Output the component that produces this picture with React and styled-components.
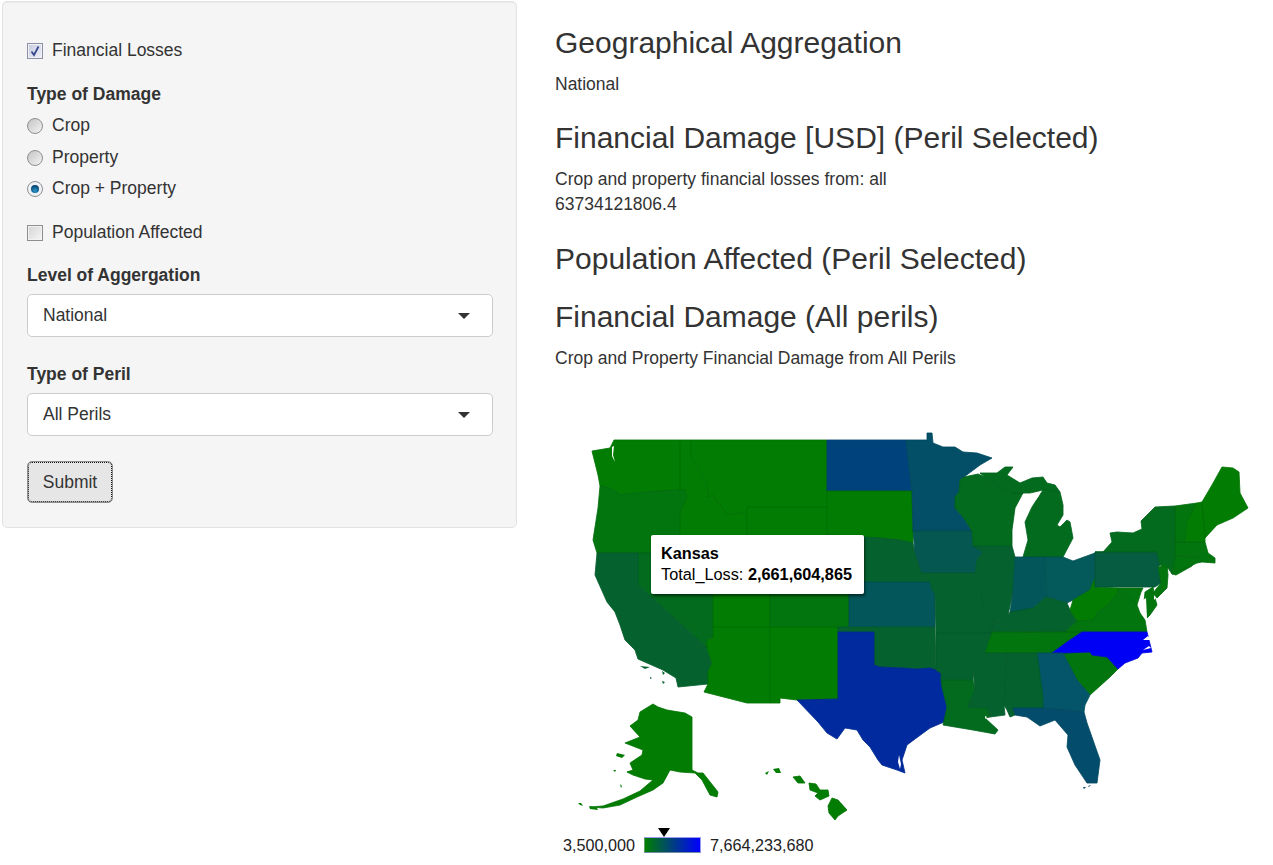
import React from "react";
import styled, { createGlobalStyle } from "styled-components";

const Global = createGlobalStyle`
  html, body { margin: 0; padding: 0; background: #fff; }
  body { font-family: "Liberation Sans", Arial, sans-serif; font-size: 17.5px; line-height: 25px; color: #333; overflow: hidden; }
`;

const Page = styled.div`
  display: grid;
  grid-template-columns: 515px 1fr;
  column-gap: 38px;
  padding-left: 2px;
  width: 1273px;
  height: 865px;
  box-sizing: border-box;
  overflow: hidden;
`;

const Well = styled.form`
  align-self: start;
  margin-top: 1px;
  height: 527px;
  box-sizing: border-box;
  padding: 36px 23px 24px 24px;
  background: #f5f5f5;
  border: 1px solid #e3e3e3;
  border-radius: 5px;
  box-shadow: inset 0 1px 1px rgba(0, 0, 0, 0.05);
  display: flex;
  flex-direction: column;
`;

const Option = styled.label`
  display: flex;
  align-items: center;
  gap: 9px;
  height: 25px;
  flex: none;
  margin-top: ${(p) => p.$top || 0}px;
`;

const Box = styled.span`
  width: 16px;
  height: 16px;
  flex: none;
  box-sizing: border-box;
  border: 1px solid ${(p) => (p.$checked ? "#8c8fa6" : "#8e8e8e")};
  background: ${(p) =>
    p.$checked
      ? "linear-gradient(135deg,#c6cbe0,#eef0f8)"
      : "linear-gradient(135deg,#d4d4d4,#f6f6f6)"};
  box-shadow: inset 0 0 0 1px #f2f2f2;
  display: flex;
  align-items: center;
  justify-content: center;
`;

const Radio = styled.span`
  width: 16px;
  height: 16px;
  flex: none;
  box-sizing: border-box;
  border-radius: 50%;
  border: 1px solid #8f8f8f;
  background: ${(p) => (p.$checked ? "#eef2f6" : "linear-gradient(135deg,#c4c4c4,#f4f4f4)")};
  display: flex;
  align-items: center;
  justify-content: center;
`;

const Dot = styled.span`
  width: 8px;
  height: 8px;
  border-radius: 50%;
  background: radial-gradient(circle at 50% 70%, #2a9ad0, #07406e 75%);
`;

const GroupLabel = styled.div`
  font-weight: 700;
  height: 25px;
  flex: none;
  margin-top: ${(p) => p.$top || 0}px;
`;

const Select = styled.div`
  flex: none;
  height: 43px;
  margin-top: ${(p) => p.$top || 0}px;
  box-sizing: border-box;
  padding: 0 22px 0 15px;
  background: #fff;
  border: 1px solid #ccc;
  border-radius: 5px;
  display: flex;
  align-items: center;
  justify-content: space-between;
`;

const Caret = styled.span`
  width: 0;
  height: 0;
  border-left: 6px solid transparent;
  border-right: 6px solid transparent;
  border-top: 6px solid #333;
`;

const Submit = styled.button`
  flex: none;
  align-self: flex-start;
  width: 86px;
  height: 42px;
  margin-top: 25px;
  padding: 0;
  font: inherit;
  color: #333;
  background: #e6e6e6;
  border: 1px solid #8c8c8c;
  border-radius: 5px;
  outline: 1px dotted #111;
  outline-offset: -2px;
`;

const Main = styled.main`
  display: block;
  min-width: 0;
`;

const Heading = styled.h3`
  margin: 24px 0 ${(p) => p.$end || 13}px;
  font-size: 30px;
  line-height: 33px;
  font-weight: 400;
  color: #333;
  white-space: nowrap;
  &:first-child { margin-top: 0; padding-top: 26px; }
`;

const Output = styled.div`
  padding-bottom: ${(p) => p.$after || 0}px;
  line-height: ${(p) => p.$line || 25}px;
`;

const MapFrame = styled.div`
  position: relative;
  margin-top: 54px;
  height: 400px;
`;

const MapSvg = styled.svg`
  display: block;
  width: 718px;
  height: 400px;
`;

const Tooltip = styled.div`
  position: absolute;
  left: 96px;
  top: 110px;
  width: 213px;
  height: 59px;
  box-sizing: border-box;
  padding: 8px 10px;
  background: #fff;
  border-radius: 2px;
  box-shadow: 1px 2px 3px rgba(0, 0, 0, 0.55);
  font-size: 16.3px;
  line-height: 21px;
  color: #000;
  white-space: nowrap;
`;

const Legend = styled.div`
  display: flex;
  align-items: center;
  gap: 9px;
  margin: 12px 0 0 8px;
  height: 16px;
  font-size: 16.2px;
  line-height: 16px;
  color: #222;
`;

const Ramp = styled.div`
  position: relative;
  width: 57px;
  height: 16px;
  box-sizing: border-box;
  border: 1px solid #9a9af0;
  border-left-color: #5f9f5f;
  border-bottom-color: #6f8fa8;
  background: linear-gradient(90deg, #007f00, #0000ff);
`;

const Marker = styled.span`
  position: absolute;
  left: 13px;
  top: -10px;
  width: 0;
  height: 0;
  border-left: 6px solid transparent;
  border-right: 6px solid transparent;
  border-top: 9px solid #000;
`;

const Region = styled.polygon`
  stroke-width: 0.8;
  stroke-linejoin: round;
`;

const Boundary = styled.polygon`
  fill: none;
  stroke: rgba(0, 50, 30, 0.12);
  stroke-width: 0.7;
`;

const Water = styled.polygon`
  fill: #fff;
`;

const Islet = styled.polygon`
  stroke: none;
`;

const G0 = "#027c02";
const G1 = "#02750e";
const G2 = "#026b1e";
const G3 = "#05622f";
const G4 = "#055c40";
const T1 = "#03575a";
const T2 = "#044f68";

const regions = [
  ["WA", G0, "592,451 610,448 614,440 680,440 680,490 657,491 637,493 620,495 610,488 600,486 598,475"],
  ["OR", G1, "600,486 610,488 620,495 637,493 657,491 680,490 685,490 687,497 680,513 680,553 597,553 593,540 598,508"],
  ["ID", G0, "680,440 691,440 691,455 697,468 707,483 708,497 713,495 727,515 747,512 747,553 680,553 680,513 687,497 685,490 680,490"],
  ["MT", G0, "691,440 827,440 827,507 747,507 747,512 727,515 713,495 708,497 707,483 697,468 691,455"],
  ["WY", G0, "747,507 827,507 827,570 747,570"],
  ["NV", G2, "638,553 713,553 713,638 707,640 707,648 638,585"],
  ["CA", G3, "597,553 638,553 638,585 707,648 712,663 708,672 708,684 678,687 676,678 663,670 638,659 635,650 625,640 620,625 615,612 607,602 595,575"],
  ["UT", G0, "713,553 747,553 747,570 770,570 770,627 713,627"],
  ["CO", G1, "770,570 849,570 849,627 770,627"],
  ["AZ", G0, "713,627 770,627 770,703 747,703 704,692 708,684 708,672 712,663 707,648 707,640 713,638"],
  ["NM", G0, "770,627 838,627 838,699 797,700 780,698 780,703 770,703"],
  ["ND", "#00437c", "827,440 906,440 912,491 827,491"],
  ["SD", G0, "827,491 912,491 913,530 913,543 900,540 880,538 865,537 827,535"],
  ["NE", G3, "827,535 865,537 880,538 900,540 913,543 915,552 922,573 930,582 849,582 849,570 827,570"],
  ["KS", T1, "849,582 930,582 932,590 935,593 935,627 849,627"],
  ["OK", G3, "838,627 935,627 936,670 930,668 917,669 903,668 880,667 874,665 874,632 838,632"],
  ["TX", "#012a9e", "838,632 874,632 874,665 880,667 903,668 917,669 930,668 936,670 941,673 942,687 947,707 944,722 930,728 915,739 907,745 902,760 905,773 897,770 882,765 878,760 870,747 863,740 857,730 845,728 837,739 827,733 818,722 797,700 838,699"],
  ["MN", T2, "906,440 927,440 927,433 932,433 933,443 943,447 955,447 963,452 977,453 992,458 980,465 964,477 960,480 959,492 955,497 955,508 963,517 972,531 913,531 912,491"],
  ["IA", "#055752", "913,531 972,531 973,540 983,552 977,560 975,573 922,573 915,552"],
  ["MO", G3, "922,573 975,573 972,580 982,593 983,607 993,620 992,633 936,633 935,593 932,590 930,582"],
  ["AR", G3, "936,633 992,633 985,653 973,670 973,680 941,680 941,673 936,670"],
  ["LA", G2, "941,680 973,680 975,690 968,707 988,708 990,717 985,718 998,730 995,734 973,730 943,725 947,707 942,687"],
  ["WI", G2, "964,477 978,474 985,477 1012,493 1023,493 1015,508 1012,530 1012,546 973,546 972,531 963,517 955,508 955,497 959,492 960,480"],
  ["MI-U", G2, "980,473 997,473 1005,467 1013,467 1007,475 1020,483 1032,478 1043,477 1047,483 1055,485 1060,492 1043,490 1030,493 1012,493 985,477"],
  ["MI-L", G2, "1043,490 1060,492 1063,505 1063,515 1057,525 1060,527 1067,520 1070,522 1073,538 1063,557 1023,557 1028,540 1025,522 1032,507"],
  ["IL", G3, "973,546 1012,546 1015,557 1013,592 1008,615 1003,625 993,620 983,607 982,593 972,580 975,573 977,560 983,552"],
  ["IN", T1, "1015,557 1045,557 1046,597 1033,608 1015,612 1010,612 1013,592"],
  ["OH", "#04595a", "1045,557 1063,557 1073,561 1095,553 1095,578 1090,590 1073,600 1067,603 1046,597"],
  ["KY", G3, "1046,597 1067,603 1070,610 1077,621 1065,632 992,633 993,620 1003,625 1008,615 1010,612 1033,608"],
  ["TN", G1, "992,632 1082,632 1067,642 1052,653 985,653"],
  ["WV", G0, "1090,590 1095,578 1095,587 1118,588 1118,592 1108,605 1098,612 1093,620 1077,621 1070,610 1073,600"],
  ["VA", G1, "1065,632 1077,621 1093,620 1098,612 1108,605 1118,592 1130,598 1137,605 1140,613 1145,620 1147,632"],
  ["SC", G1, "1063,653 1090,652 1092,655 1107,657 1118,669 1110,677 1090,695 1077,680"],
  ["NC", "#0000f5", "1082,632 1147,632 1152,652 1142,653 1138,658 1125,663 1118,669 1107,657 1092,655 1090,652 1063,653 1052,653 1067,642"],
  ["GA", "#04556a", "1037,653 1063,653 1077,680 1090,695 1085,705 1084,712 1043,708 1042,697"],
  ["AL", G3, "1007,653 1037,653 1043,697 1043,708 1013,708 1015,715 1010,717 1007,710 1004,705"],
  ["MS", G3, "985,653 1007,653 1004,705 1005,715 990,717 988,708 968,707 975,690 973,670"],
  ["FL", "#044c6c", "1013,708 1043,708 1084,712 1087,723 1100,760 1097,783 1087,783 1075,765 1067,747 1068,735 1055,720 1040,726 1027,717 1015,715"],
  ["PA", G4, "1095,552 1157,552 1160,565 1158,567 1161,583 1155,587 1095,587"],
  ["NY", G2, "1095,552 1103,552 1112,542 1110,533 1117,532 1133,533 1142,529 1141,521 1155,507 1175,506 1175,556 1175,571 1172,574 1168,568 1160,565 1157,552"],
  ["NJ", G1, "1158,567 1167,565 1168,575 1167,588 1157,598 1153,593 1161,583"],
  ["VT", G1, "1175,506 1197,503 1187,522 1185,542 1175,542"],
  ["NH", G0, "1197,503 1202,502 1205,535 1205,542 1185,542 1187,522"],
  ["ME", G0, "1202,502 1212,485 1222,467 1233,468 1239,472 1240,493 1248,508 1233,518 1217,525 1205,538"],
  ["MA", G1, "1175,542 1205,542 1208,553 1215,558 1215,563 1202,562 1198,557 1175,556"],
  ["CT", G1, "1175,556 1198,557 1202,562 1197,563 1172,574"],
  ["LI", G1, "1172,574 1193,564 1192,566 1176,575"],
  ["MD", G1, "1118,588 1143,588 1141,592 1137,605 1130,598 1118,592"],
  ["DE", G1, "1145,592 1153,587 1155,598 1157,605 1150,615 1147,618 1144,602"],
  ["AK", G0, "653,704 658,707 667,710 685,713 692,717 692,770 698,773 703,773 718,792 717,797 710,795 702,780 695,773 680,772 670,770 663,783 653,790 637,797 620,805 603,808 590,807 603,806 623,799 640,791 653,780 645,779 633,775 627,772 633,770 630,763 642,755 643,750 625,743 640,737 630,726 638,720 640,712"],
  ["HI-O", G0, "793,777 800,776 805,783 798,783"],
  ["HI-M", G0, "809,783 816,784 820,790 828,790 829,796 820,800 815,796 818,793 810,790"],
  ["HI-B", G0, "832,798 838,800 847,810 838,816 835,820 829,813 828,806"],
];

const islets = [
  [G0, "617,753 625,755 622,758 616,756"],
  [G0, "578,803 581,803 583,806 580,805"],
  [G0, "589,806 597,808 598,810 590,809"],
  [G0, "613,770 616,770 615,772"],
  [G0, "620,784 622,786 621,788"],
  [G0, "627,771 633,771 631,774"],
  [G0, "773,769 779,768 781,773 776,773"],
  [G0, "765,773 769,771 767,775"],
  [G3, "640,666 650,667 645,669"],
  [G3, "650,677 652,678 650,679"],
  [G3, "662,671 665,673 663,675"],
  [G3, "662,681 665,682 663,684"],
  [T2, "1083,787 1086,787 1084,789"],
  [T2, "1088,786 1091,785 1089,787"],
];

const waters = [
  "612,447 614,446 613,455 615,462 612,456",
  "1037,496 1040,494 1036,500",
  "1148,636 1151,640 1143,640",
  "1149,646 1151,648 1143,650",
  "1143,600 1146,598 1147,618 1146,620 1142,612",
  "1154,595 1156,598 1154,600",
  "899,755 901,764 900,769 898,762",
  "985,716 987,717 985,719",
];

function Check() {
  return (
    <svg width="12" height="12" viewBox="0 0 12 12" aria-hidden="true">
      <path d="M2.5 6.5 L5 10 L9.5 1.5" fill="none" stroke="#3b4a8f" strokeWidth="1.8" />
    </svg>
  );
}

function UsaMap() {
  return (
    <MapSvg viewBox="555 425 718 400" role="img" aria-label="Map of US states by total loss">
      {regions.map(([id, fill, points]) => (
        <Region key={id} fill={fill} stroke={fill} points={points} />
      ))}
      {regions.map(([id, , points]) => (
        <Boundary key={id} points={points} />
      ))}
      {islets.map(([fill, points]) => (
        <Islet key={points} fill={fill} points={points} />
      ))}
      {waters.map((points) => (
        <Water key={points} points={points} />
      ))}
    </MapSvg>
  );
}

export default function App() {
  return (
    <Page>
      <Global />
      <Well>
        <Option>
          <Box $checked><Check /></Box>
          Financial Losses
        </Option>
        <GroupLabel $top={19}>Type of Damage</GroupLabel>
        <Option $top={6}><Radio />Crop</Option>
        <Option $top={7}><Radio />Property</Option>
        <Option $top={6}><Radio $checked><Dot /></Radio>Crop + Property</Option>
        <Option $top={19}><Box />Population Affected</Option>
        <GroupLabel $top={18}>Level of Aggergation</GroupLabel>
        <Select $top={6}>National<Caret /></Select>
        <GroupLabel $top={25}>Type of Peril</GroupLabel>
        <Select $top={6}>All Perils<Caret /></Select>
        <Submit type="button">Submit</Submit>
      </Well>
      <Main>
        <Heading>Geographical Aggregation</Heading>
        <Output>National</Output>
        <Heading>Financial Damage [USD] (Peril Selected)</Heading>
        <Output $line={24.5} $after={2}>
          Crop and property financial losses from: all
          <br />
          63734121806.4
        </Output>
        <Heading $end={25}>Population Affected (Peril Selected)</Heading>
        <Heading>Financial Damage (All perils)</Heading>
        <Output>Crop and Property Financial Damage from All Perils</Output>
        <MapFrame>
          <UsaMap />
          <Tooltip>
            <strong>Kansas</strong>
            <br />
            Total_Loss: <strong>2,661,604,865</strong>
          </Tooltip>
        </MapFrame>
        <Legend>
          3,500,000
          <Ramp><Marker /></Ramp>
          7,664,233,680
        </Legend>
      </Main>
    </Page>
  );
}
